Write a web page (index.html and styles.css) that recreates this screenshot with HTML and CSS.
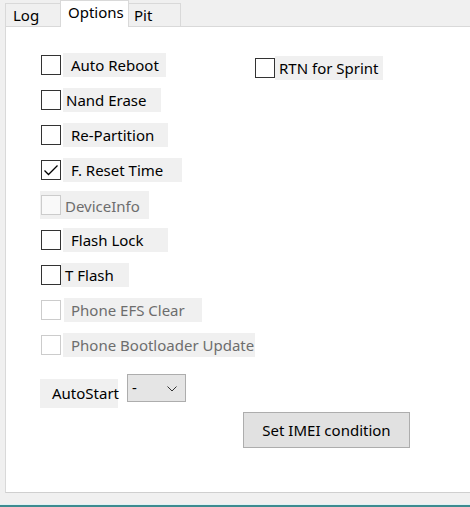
FILE: index.html
```html
<!DOCTYPE html>
<html>
<head>
<meta charset="utf-8">
<link rel="stylesheet" href="styles.css">
</head>
<body>
<div class="window">
  <div class="tabs">
    <div class="tab tab-log">Log</div>
    <div class="tab tab-active">Options</div>
    <div class="tab tab-pit">Pit</div>
  </div>
  <div class="page">
    <div class="content">
      <div class="top">
        <div class="col-left">
          <div class="cb-row"><span class="box"></span><span class="lbl w103 p8">Auto Reboot</span></div>
          <div class="cb-row"><span class="box"></span><span class="lbl w98 p3">Nand Erase</span></div>
          <div class="cb-row"><span class="box"></span><span class="lbl w105 p8">Re-Partition</span></div>
          <div class="cb-row"><span class="box checked"><svg viewBox="0 0 18 18" width="18" height="18"><path d="M2.5 9.5 L6.5 13.5 L15.5 4.5" fill="none" stroke="#000" stroke-width="1.3"/></svg></span><span class="lbl w119 p8">F. Reset Time</span></div>
          <div class="cb-row devinfo"><span class="box disabled"></span><span class="lbl-plain dis p4">DeviceInfo</span></div>
          <div class="cb-row"><span class="box"></span><span class="lbl w105 p8">Flash Lock</span></div>
          <div class="cb-row"><span class="box"></span><span class="lbl w68 p4 m0">T Flash</span></div>
          <div class="cb-row"><span class="box disabled"></span><span class="lbl dis w138 p7 m2">Phone EFS Clear</span></div>
          <div class="cb-row"><span class="box disabled"></span><span class="lbl dis w203 p8">Phone Bootloader Update</span></div>
        </div>
        <div class="col-right">
          <div class="cb-row rtn"><span class="box"></span><span class="lbl w108 p4 m0">RTN for Sprint</span></div>
        </div>
      </div>
      <div class="auto-row">
        <span class="auto-lbl">AutoStart</span>
        <div class="combo">
          <span class="combo-val">-</span>
          <svg class="chev" viewBox="0 0 10 6" width="10" height="6"><path d="M0.5 0.5 L5 5 L9.5 0.5" fill="none" stroke="#333" stroke-width="1"/></svg>
        </div>
      </div>
      <div class="btn-row">
        <button class="btn">Set IMEI condition</button>
      </div>
    </div>
  </div>
  <div class="status"></div>
</div>
</body>
</html>
```
FILE: styles.css
```css
html, body {
  margin: 0;
  padding: 0;
}
body {
  width: 470px;
  height: 507px;
  overflow: hidden;
  background: #f0f0f0;
  font-family: "Noto Sans", "Open Sans", sans-serif;
  font-size: 15px;
  color: #000;
}
.window {
  width: 470px;
  height: 507px;
  display: flex;
  flex-direction: column;
}
.tabs {
  height: 26px;
  display: flex;
  align-items: flex-end;
  padding-left: 5px;
  flex: none;
}
.tab {
  box-sizing: border-box;
  background: #f0f0f0;
  border: 1px solid #d9d9d9;
  border-bottom: none;
  line-height: 22px;
  height: 23px;
  white-space: nowrap;
}
.tab-log {
  width: 55px;
  padding-left: 7px;
  border-right: none;
}
.tab-active {
  width: 69px;
  height: 27px;
  margin-bottom: -1px;
  padding-left: 7px;
  background: #fff;
  position: relative;
  z-index: 1;
}
.tab-pit {
  width: 52px;
  padding-left: 5px;
  border-left: none;
}
.page {
  margin-left: 5px;
  height: 467px;
  box-sizing: border-box;
  border: 1px solid #d9d9d9;
  border-right: none;
  border-bottom-color: #cfcfcf;
  background: #fff;
  flex: none;
}
.content {
  padding: 26px 0 0 35px;
}
.top {
  display: flex;
}
.col-left {
  width: 214px;
  display: flex;
  flex-direction: column;
  gap: 11px;
}
.col-right {
  padding-top: 2px;
}
.cb-row {
  display: flex;
  align-items: center;
  height: 24px;
}
.box {
  width: 20px;
  height: 20px;
  box-sizing: border-box;
  border: 1px solid #333;
  background: #fff;
  flex: none;
  display: flex;
}
.box.disabled {
  border-color: #cccccc;
}
.box svg {
  display: block;
}
.lbl {
  height: 24px;
  box-sizing: border-box;
  padding-top: 1px;
  line-height: 22px;
  background: #f0f0f0;
  margin-left: 2px;
  white-space: nowrap;
}
.lbl-plain {
  line-height: 22px;
  padding-top: 1px;
  white-space: nowrap;
}
.dis {
  color: #6d6d6d;
}
.devinfo {
  height: 28px;
  margin: -2px 0 -2px -1px;
  padding-left: 1px;
  width: 108px;
  background: #f0f0f0;
}
.devinfo .box {
  background: #f9f9f9;
}
.rtn {
  height: 25px;
}
.w68 { width: 68px; }
.w98 { width: 98px; }
.w103 { width: 103px; }
.w105 { width: 105px; }
.w108 { width: 108px; }
.w119 { width: 119px; }
.w138 { width: 138px; }
.w203 { width: 203px; }
.p3 { padding-left: 3px; }
.p4 { padding-left: 4px; }
.p7 { padding-left: 7px; }
.p8 { padding-left: 8px; }
.m0 { margin-left: 0; }
.m2 { margin-left: 3px; }
.auto-row {
  display: flex;
  align-items: flex-start;
  margin-top: 17px;
}
.auto-lbl {
  margin: 5px 0 0 -1px;
  width: 78px;
  height: 29px;
  box-sizing: border-box;
  padding-left: 12px;
  line-height: 29px;
  background: #f0f0f0;
}
.combo {
  margin-left: 9px;
  width: 59px;
  height: 28px;
  box-sizing: border-box;
  border: 1px solid #adadad;
  background: #e5e5e5;
  display: flex;
  align-items: center;
  justify-content: space-between;
  padding: 0 8px 0 4px;
}
.combo-val {
  line-height: 18px;
  margin-top: -3px;
}
.chev {
  display: block;
  margin-top: 1px;
}
.btn-row {
  margin-top: 4px;
  padding-left: 202px;
}
.btn {
  width: 167px;
  height: 36px;
  box-sizing: border-box;
  border: 1px solid #adadad;
  background: #e1e1e1;
  font-family: "Noto Sans", "Open Sans", sans-serif;
  font-size: 15px;
  color: #000;
  padding: 0;
  border-radius: 0;
}
.status {
  flex: none;
  height: 14px;
  box-sizing: border-box;
  background: #f0f0f0;
  border-bottom: 2px solid #3d8b90;
  box-shadow: inset 0 -1px 0 #dff3f5;
}
```
